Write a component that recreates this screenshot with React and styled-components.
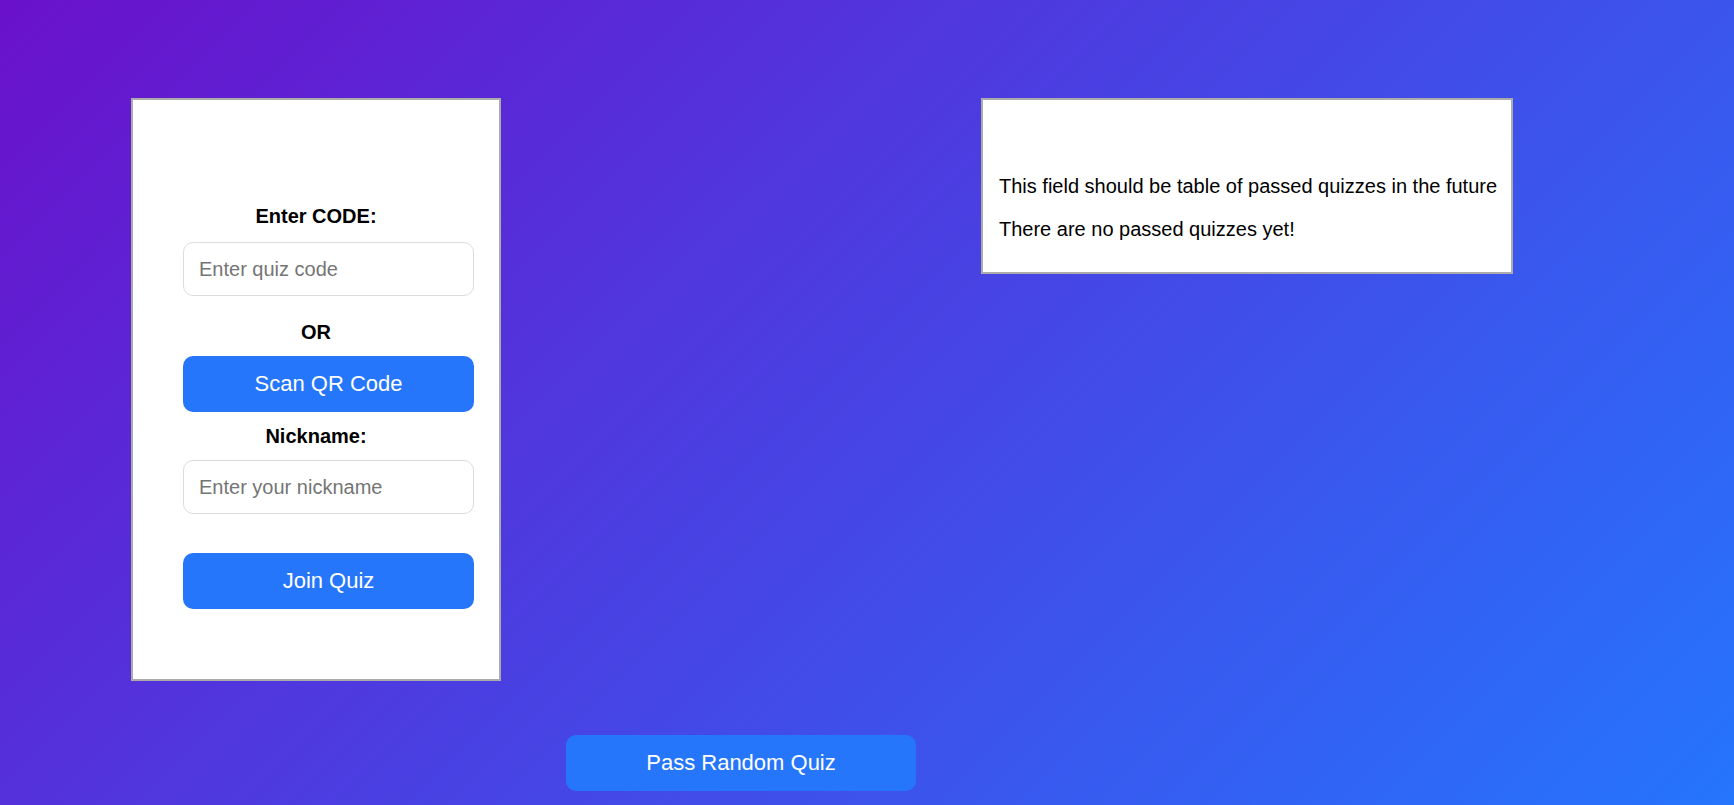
import React from "react";
import styled, { createGlobalStyle } from "styled-components";

const GlobalStyle = createGlobalStyle`
  html, body {
    margin: 0;
    padding: 0;
  }
  body {
    font-family: "Liberation Sans", Arial, sans-serif;
    color: #000;
  }
`;

const Page = styled.div`
  min-height: 805px;
  box-sizing: border-box;
  background: linear-gradient(135deg, #6a11cb 0%, #2575fc 100%);
  padding: 98px 0 0 131px;
  display: flex;
  flex-direction: column;
`;

const Row = styled.div`
  display: flex;
  align-items: flex-start;
  gap: 480px;
`;

const Card = styled.div`
  background: #fff;
  border: 2px solid #ababab;
  box-sizing: border-box;
`;

const JoinCard = styled(Card)`
  width: 370px;
  padding: 105px 50px 70px;
  display: flex;
  flex-direction: column;
  align-items: center;
`;

const HistoryCard = styled(Card)`
  width: 532px;
  padding: 55px 16px 11px;
`;

const Label = styled.label`
  display: block;
  font-size: 20px;
  line-height: 23px;
  font-weight: bold;
  text-align: center;
  margin-top: ${(p) => p.$mt || 0}px;
`;

const Input = styled.input`
  width: 291px;
  height: 54px;
  box-sizing: border-box;
  margin-top: ${(p) => p.$mt || 0}px;
  align-self: flex-start;
  padding: 0 15px;
  border: 1px solid #dcdcdc;
  border-radius: 10px;
  font-family: inherit;
  font-size: 20px;
  outline: none;
  &::placeholder {
    color: #757575;
  }
`;

const BlueButton = styled.button`
  box-sizing: border-box;
  border: none;
  border-radius: 10px;
  background: #2676fc;
  color: #fff;
  font-family: inherit;
  cursor: pointer;
`;

const CardButton = styled(BlueButton)`
  width: 291px;
  height: 56px;
  align-self: flex-start;
  font-size: 22px;
  margin-top: ${(p) => p.$mt || 0}px;
`;

const Note = styled.p`
  margin: 20px 0;
  font-size: 20px;
  line-height: 23px;
  white-space: nowrap;
`;

const RandomButton = styled(BlueButton)`
  width: 350px;
  height: 56px;
  font-size: 22px;
  margin: 54px 0 14px 435px;
`;

export default function App() {
  return (
    <>
      <GlobalStyle />
      <Page>
        <Row>
          <JoinCard>
            <Label>Enter CODE:</Label>
            <Input $mt={14} placeholder="Enter quiz code" />
            <Label $mt={25}>OR</Label>
            <CardButton $mt={12}>Scan QR Code</CardButton>
            <Label $mt={13}>Nickname:</Label>
            <Input $mt={12} placeholder="Enter your nickname" />
            <CardButton $mt={39}>Join Quiz</CardButton>
          </JoinCard>
          <HistoryCard>
            <Note>This field should be table of passed quizzes in the future</Note>
            <Note>There are no passed quizzes yet!</Note>
          </HistoryCard>
        </Row>
        <RandomButton>Pass Random Quiz</RandomButton>
      </Page>
    </>
  );
}
